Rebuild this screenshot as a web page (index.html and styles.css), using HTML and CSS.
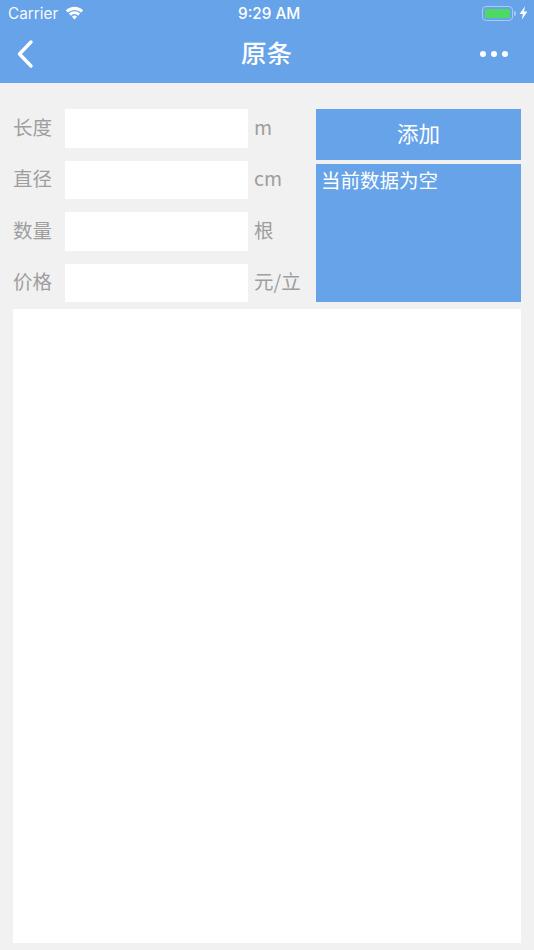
FILE: index.html
```html
<!DOCTYPE html>
<html lang="zh">
<head>
  <meta charset="UTF-8" />
  <meta name="viewport" content="width=device-width, initial-scale=1.0"/>
  <title>原条</title>
  <link rel="stylesheet" href="styles.css">
</head>
<body>
  <div class="header">
    <div class="status">
      <div class="status-left">
        <span class="carrier">Carrier</span>
        <svg class="wifi" width="19" height="14" viewBox="0 0 18 14">
          <path d="M0.3 4.4 A12.4 12.4 0 0 1 17.7 4.4 L15.6 6.6 A9.4 9.4 0 0 0 2.4 6.6 Z" fill="#fff"/>
          <path d="M3.4 7.6 A7.8 7.8 0 0 1 14.6 7.6 L12.6 9.7 A4.9 4.9 0 0 0 5.4 9.7 Z" fill="#fff"/>
          <path d="M6.5 10.7 A3.5 3.5 0 0 1 11.5 10.7 L9 13.5 Z" fill="#fff"/>
        </svg>
      </div>
      <span class="time">9:29 AM</span>
      <div class="status-right">
        <div class="battery"><div class="battery-level"></div></div>
        <div class="battery-tip"></div>
        <svg class="bolt" width="9" height="14" viewBox="0 0 9 14">
          <path d="M6 0.2 L0.6 8 L3.9 8 L2.8 13.8 L8.4 5.6 L5 5.6 Z" fill="#fff"/>
        </svg>
      </div>
    </div>
    <div class="nav">
      <svg class="back" width="18" height="30" viewBox="0 0 18 30">
        <path d="M15 3 L3.5 15 L15 27" fill="none" stroke="#fff" stroke-width="3.4" stroke-linecap="round" stroke-linejoin="round"/>
      </svg>
      <h1 class="title">原条</h1>
      <div class="more"><i></i><i></i><i></i></div>
    </div>
  </div>

  <div class="content">
    <div class="top">
      <div class="form">
        <div class="row">
          <label>长度</label>
          <input type="text">
          <span class="unit">m</span>
        </div>
        <div class="row">
          <label>直径</label>
          <input type="text">
          <span class="unit">cm</span>
        </div>
        <div class="row">
          <label>数量</label>
          <input type="text">
          <span class="unit">根</span>
        </div>
        <div class="row">
          <label>价格</label>
          <input type="text">
          <span class="unit">元/立</span>
        </div>
      </div>
      <div class="side">
        <button class="add">添加</button>
        <div class="summary">当前数据为空</div>
      </div>
    </div>
    <div class="list"></div>
  </div>
</body>
</html>
```

FILE: styles.css
```css
* {
  box-sizing: border-box;
}

body {
  margin: 0;
  height: 950px;
  overflow: hidden;
  background: #f1f1f1;
  font-family: "Noto Sans CJK SC", "Liberation Sans", sans-serif;
  display: flex;
  flex-direction: column;
}

.header {
  height: 83px;
  background: #67a3e8;
  color: #fff;
}

.status {
  height: 26px;
  padding: 0 6px 0 8px;
  display: flex;
  align-items: center;
  justify-content: space-between;
  position: relative;
  font-family: "Inter", "Liberation Sans", sans-serif;
  font-size: 15.3px;
}

.status-left {
  display: flex;
  align-items: center;
  gap: 7px;
}

.carrier {
  opacity: 0.95;
}

.time {
  position: absolute;
  left: 238px;
  top: 4px;
  font-weight: 500;
}

.status-right {
  display: flex;
  align-items: center;
}

.battery {
  width: 31px;
  height: 15px;
  padding: 2px;
  border: 1px solid #a9cbf2;
  border-radius: 4px;
}

.battery-level {
  height: 100%;
  background: #4cd964;
  border-radius: 1.5px;
}

.battery-tip {
  width: 2px;
  height: 5px;
  margin-left: 1px;
  background: #a9cbf2;
  border-radius: 0 2px 2px 0;
}

.bolt {
  margin-left: 3px;
}

.nav {
  height: 57px;
  padding: 0 26px 1px 16px;
  display: flex;
  align-items: center;
  justify-content: space-between;
  position: relative;
}

.title {
  position: absolute;
  left: 241px;
  top: 8px;
  margin: 0;
  font-size: 25.5px;
  line-height: 36px;
  font-weight: 500;
}

.more {
  display: flex;
  gap: 4.5px;
}

.more i {
  width: 6.5px;
  height: 6.5px;
  border-radius: 50%;
  background: #fff;
}

.content {
  flex: 1;
  padding: 26px 13px 7px;
  display: flex;
  flex-direction: column;
  gap: 7px;
}

.top {
  display: flex;
  justify-content: space-between;
}

.form {
  display: flex;
  flex-direction: column;
  gap: 13px;
}

.row {
  height: 38.5px;
  display: flex;
  align-items: center;
  font-size: 19.5px;
  color: #9e9e9e;
}

.row label {
  width: 52px;
  margin-bottom: 4px;
}

.row input {
  width: 183px;
  height: 100%;
  border: none;
  background: #fff;
}

.unit {
  margin-left: 6px;
  margin-bottom: 4px;
  white-space: nowrap;
}

.side {
  width: 205px;
  display: flex;
  flex-direction: column;
  gap: 4px;
}

.add {
  height: 51px;
  padding: 0 0 4px;
  border: none;
  background: #67a3e8;
  color: #fff;
  font-family: inherit;
  font-size: 21.5px;
}

.summary {
  flex: 1;
  padding: 2px 5px;
  background: #67a3e8;
  color: #fff;
  font-size: 19.5px;
  line-height: 28px;
}

.list {
  flex: 1;
  background: #fff;
}
```
